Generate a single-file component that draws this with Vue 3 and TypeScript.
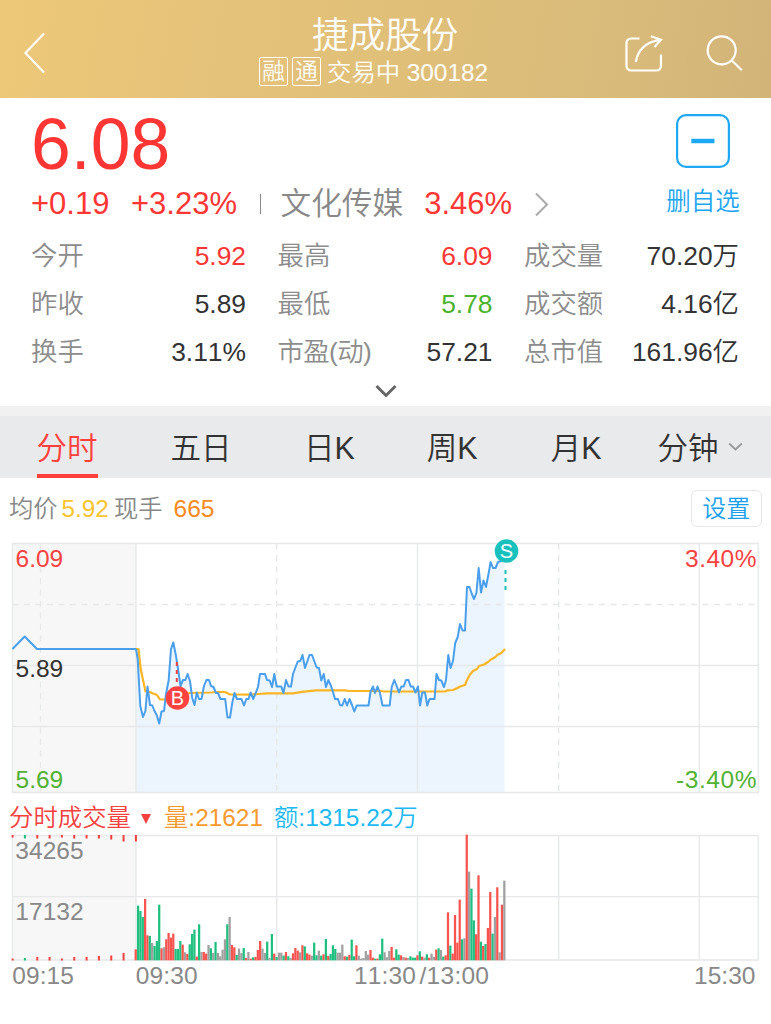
<script setup lang="ts">
interface Stat { label: string; value: string; tone?: 'up' | 'down' }
interface Bar { x: number; h: number; fill: string }
interface Label { text: string; x: number; y: number; w: number; tone: string }

const stats: Stat[] = [
  { label: '今开', value: '5.92', tone: 'up' },
  { label: '最高', value: '6.09', tone: 'up' },
  { label: '成交量', value: '70.20万' },
  { label: '昨收', value: '5.89' },
  { label: '最低', value: '5.78', tone: 'down' },
  { label: '成交额', value: '4.16亿' },
  { label: '换手', value: '3.11%' },
  { label: '市盈(动)', value: '57.21' },
  { label: '总市值', value: '161.96亿' },
]

const tabs: string[] = ['分时', '五日', '日K', '周K', '月K', '分钟']

const auction = '12.5,649 24.7,636.5 37,649 136,649'
const price =
  '136,649 137.7,659 140.3,706 143,717 145.4,711 147.5,686.5 150,705 152.3,705.5 154.5,711 156.7,715 159.2,723.5 161.5,711.5 164,711 166,694 168.7,680 171,649 173.3,642.5 176,656 178.2,670 180.5,686 183,680 185.3,680 187.6,674 190,681 192.2,698 194.5,705 196.8,692.5 199,699 201.5,699 204,686 206.4,680 209,680 211,686 213.5,687 216,693 218,693 220.5,699 225.2,699 227.5,717.5 230,717.5 232.2,703 234.5,693 237,699 241.5,699 244,705.5 246.3,699 248.5,699 250.6,692.5 253.3,699 255.7,693 258,687 260,674 265,674 267,680 269.7,680.5 272,687 274.3,674 276.7,686.5 281.3,686.5 283.5,693 286,680 288.5,686.5 291,686.5 293,674 297.7,661.5 300.3,661 302.5,655 305,668 309.5,655 312,655 316.7,667.5 319,668 321.3,680.5 323.7,674 326,687 328.3,680 331,686 333,692 335,699 338,699 340,705 342.3,705.5 344.7,699 347,705.5 349.5,699 352,705 354.3,711.5 356.7,705.5 368.5,705.5 370.5,692 373,686.5 375,693 377.5,686.5 380,693 382.5,705.5 389.7,705.5 391.7,687 394.3,680 396.7,686 399,692.5 401.3,686.5 403.7,686.5 406,680 408.5,680 410.7,686.5 413,686.5 415.5,692.5 418,686.5 420,705.5 422.3,692.5 425,692.5 427.3,705.5 429.5,699 434.5,699 436.5,674 439,680 441.3,680.5 444,687 446,680 448.3,655 450.6,668 453,661 455.2,643 457.7,637 460,624 462.5,630.5 465,630.5 467,587 469.5,587 471.5,593 474,599 476.4,593 478.7,568 481,592.5 483.5,580.5 486,587 488.5,574 490.6,562 493,568 495.5,568 498,562 501,561 504.5,556'
const average =
  '136,649 138.5,649 140.7,669 143,680 145.5,691.5 150,692 152.5,693.3 157,695 160,699.5 165,699.5 172,696 190,693 212,692.5 215,692 225,692 230,694.5 250,694.7 258,694 267,693.3 293,693.3 302,691.8 316,690.3 345,690.3 349,691 380,691 385,691.5 445,691.5 448,690.3 453,690 457.5,688 460,686.5 465,685 467,680 470,674.5 473,671 477,669 479,666 484,664.5 488,662 491,659.5 495,657.3 498,654.5 501,653.3 505,649'

const palette: Record<string, string> = { r: '#f8544f', g: '#1fbf80', n: '#a0a0a0' }

// One token per minute: colour key followed by the bar's top on a 0-496 scale.
const ticks =
  'r463 g332 g348 g366 r312 r421 g423 n444 g453 g438 g329 r460 n457 r433 r414 r428 r416 g462 g462 g438 r449 n472 r477 g448 g417 g404 r485 g388 n471 r471 r476 n450 g460 n474 g441 n474 n484 n464 n433 g388 n366 r450 r457 g480 n461 n474 g459 r489 n471 r491 g487 r486 r465 r438 n461 n474 g440 n489 g417 r476 g486 n473 n473 g482 r471 g484 n489 r475 r459 r467 n472 r451 g454 r475 r479 n482 g443 g481 n467 g482 r478 g432 r483 g477 g451 g462 n473 n473 n449 r484 g485 r480 g434 g484 r451 n482 n491 n489 n468 n479 r465 r488 g491 r491 g478 g431 n472 n487 n468 r456 r488 g463 g479 r481 n486 r488 n489 g484 g488 g488 r481 g469 r485 n488 g478 r488 n476 n486 r464 g460 n465 g485 r481 r352 g452 r476 r360 r443 r314 g433 n430 r119 n230 g281 g376 r418 r241 g440 r453 g447 r399 r291 g416 n366 r277 n472 r329 n257'.split(' ')
const step = (504.3 - 135.7) / (ticks.length - 1)
const bars: Bar[] = ticks.map((t, i) => ({
  x: 135.7 + i * step - 1.1,
  h: (496 - Number(t.slice(1))) / 3,
  fill: palette[t[0]],
}))

const topTicks = [2.5, 3.5, 3.5, 3.5, 2.5, 3.5, 3.5, 3.5, 4.5, 6.5, 6.5]
const bottomTicks = [2, 2.5, 3.5, 3.5, 2, 3.5, 3.5, 4.5, 5, 7.5]
const tickX = (i: number): number => 11.6 + i * 12.33
const tickFill = (i: number): string => (i === 1 ? palette.g : '#f3403c')

const labels: Label[] = [
  { text: '6.09', x: 15.5, y: 567, w: 47.7, tone: 'up' },
  { text: '5.89', x: 15.5, y: 677, w: 47.7, tone: 'ink' },
  { text: '5.69', x: 15.5, y: 787.5, w: 47.7, tone: 'down' },
  { text: '3.40%', x: 685, y: 567, w: 71.5, tone: 'up' },
  { text: '-3.40%', x: 676, y: 787.5, w: 80.5, tone: 'down' },
  { text: '34265', x: 15.2, y: 858.8, w: 68.5, tone: 'mute' },
  { text: '17132', x: 15.2, y: 920.3, w: 68.5, tone: 'mute' },
  { text: '09:15', x: 12.2, y: 983.6, w: 61.8, tone: 'mute' },
  { text: '09:30', x: 135.8, y: 983.6, w: 61.8, tone: 'mute' },
  { text: '11:30', x: 354, y: 983.6, w: 61.8, tone: 'mute' },
  { text: '/13:00', x: 419.5, y: 983.6, w: 69.5, tone: 'mute' },
  { text: '15:30', x: 694, y: 983.6, w: 61.5, tone: 'mute' },
]
</script>

<template>
  <main class="page">
    <header class="bar">
      <svg class="back" width="24" height="44" viewBox="0 0 24 44"><path d="M21 2.5 2.5 22 21 41.5" /></svg>
      <div class="heading">
        <h1>捷成股份</h1>
        <div class="sub">
          <span class="tag">融</span><span class="tag">通</span>
          <span class="state">交易中</span><span class="code">300182</span>
        </div>
      </div>
      <div class="actions">
        <svg width="40" height="40" viewBox="0 0 40 40">
          <path d="M14.500 4.500H6a4.500 4.500 0 0 0-4.500 4.500V32a4.500 4.500 0 0 0 4.500 4.500H31.500a4.500 4.500 0 0 0 4.500-4.500V20.500" />
          <path d="M10.800 28.200C12.500 17 19 8.500 35 5.900M25.800 2.300l10.200 3.400-6.500 7.300" />
        </svg>
        <svg width="40" height="40" viewBox="0 0 40 40">
          <circle cx="14.700" cy="16.300" r="14" /><path d="m24.600 26.200 10.200 10" />
        </svg>
      </div>
    </header>

    <section class="summary">
      <div class="top">
        <div class="quote">
          <div class="last">6.08</div>
          <div class="change">
            <span class="up">+0.19</span><span class="up pct">+3.23%</span>
            <i class="rule"></i>
            <span class="sector">文化传媒</span><span class="up">3.46%</span>
            <svg width="16" height="25" viewBox="0 0 16 25"><path d="m2 1.500 11 11-11 11" /></svg>
          </div>
        </div>
        <div class="favourite">
          <svg width="54" height="54" viewBox="0 0 54 54">
            <rect x="1.100" y="1.100" width="51.800" height="51.800" rx="9" /><path d="M15.300 27h23.200" />
          </svg>
          <span>删自选</span>
        </div>
      </div>
      <dl class="stats">
        <div v-for="s in stats" :key="s.label">
          <dt>{{ s.label }}</dt><dd :class="s.tone">{{ s.value }}</dd>
        </div>
      </dl>
      <svg class="more" width="24" height="16" viewBox="0 0 24 16"><path d="m2.500 3 9.500 9.500L21.500 3" /></svg>
    </section>

    <nav class="tabs">
      <span v-for="(t, i) in tabs" :key="t" :class="{ active: i === 0 }">{{ t }}</span>
      <svg width="15" height="10" viewBox="0 0 15 10"><path d="m1.200 1.500 6.300 6 6.300-6" /></svg>
    </nav>

    <div class="legend">
      <span>均价</span><span class="avg">5.92</span><span>现手</span><span class="lot">665</span>
      <button type="button">设置</button>
    </div>

    <div class="charts">
      <div class="vol-legend">
        <span class="name">分时成交量</span>
        <svg width="10" height="10" viewBox="0 0 10 10"><path d="M0 0h10L5 10z" /></svg>
        <span class="vol">量:21621</span><span class="amt">额:1315.22万</span>
      </div>
      <svg class="plot" width="771" height="484" viewBox="0 540 771 484">
        <rect class="pre" x="12.500" y="543.500" width="123.500" height="249" />
        <rect class="pre" x="12.500" y="835.500" width="123.500" height="125" />
        <polygon class="area" :points="`136,792.500 ${price} 504.500,792.500`" />
        <g class="grid">
          <path d="M12.500 543.500H758.200V792.500H12.500ZM12.500 665.500H758.200M12.500 726.500H758.200M136 543.500V792.500M417.500 543.500V792.500M699.300 543.500V792.500" />
          <path class="dash" d="M12.500 604.500H758.200M40.500 543.500V792.500M276.700 543.500V792.500M558.700 543.500V792.500" />
          <path d="M12.500 835.500H758.200V960H12.500ZM12.500 896.700H758.200M136 835.500V960M276.700 835.500V960M417.500 835.500V960M558.700 835.500V960M699.300 835.500V960" />
        </g>
        <polyline class="average" :points="average" />
        <polyline class="price" :points="auction" />
        <polyline class="price" :points="price" />
        <rect v-for="(b, i) in bars" :key="i" :x="b.x" :y="960.300 - b.h" width="2.250" :height="b.h" :fill="b.fill" />
        <rect v-for="(h, i) in topTicks" :key="'t' + i" :x="tickX(i)" y="835" width="2" :height="h" :fill="tickFill(i)" />
        <rect v-for="(h, i) in bottomTicks" :key="'b' + i" :x="tickX(i)" :y="960.500 - h" width="2" :height="h" :fill="tickFill(i)" />
        <path class="buy-line" d="M176.800 662V686" />
        <circle cx="177.500" cy="698" r="11.800" fill="#ff423f" />
        <text class="pin" x="177.500" y="705.200">B</text>
        <path class="sell-line" d="M505.500 570V592" />
        <circle cx="506.500" cy="551" r="11.800" fill="#18c1bd" />
        <text class="pin" x="506.500" y="558.300">S</text>
        <text v-for="l in labels" :key="l.text" :class="l.tone" :x="l.x" :y="l.y" :textLength="l.w">{{ l.text }}</text>
      </svg>
    </div>
  </main>
</template>

<style>
body { background: #fff; }
</style>

<style scoped>
.page {
  width: 771px;
  height: 1024px;
  overflow: hidden;
  background: #fff;
  color: #333;
  font-family: "Liberation Sans", "Noto Sans CJK SC", sans-serif;
  font-weight: 350;
  font-kerning: none;
  white-space: nowrap;
}
svg { display: block; fill: none; flex: none; overflow: visible; }
.up { color: #ff3633; fill: #f8423f; }
.down { color: #4bb32a; fill: #51b232; }

.bar {
  display: grid;
  grid-template-columns: 259px 1fr 146px;
  height: 97.500px;
  background: linear-gradient(100deg, #edc878 0%, #e5c27a 30%, #dfbf78 55%, #d9bb7b 78%, #d2b479 100%);
  color: #fff;
}
.bar svg { stroke: #fff; stroke-width: 2.200; }
.back { margin: 31px 0 0 22.500px; }
.heading { padding-top: 16px; }
h1 { margin: 0 0 0 53px; font-size: 36.600px; font-weight: inherit; line-height: 40px; }
.sub { display: flex; height: 32px; line-height: 33px; font-size: 24.400px; }
.tag {
  box-sizing: border-box;
  width: 29px;
  height: 29px;
  margin: 1px 4px 0 0;
  border: 1px solid #fff;
  border-radius: 2px;
  font-size: 22.500px;
  line-height: 27px;
  text-align: center;
}
.state { margin-left: 2px; }
.code { margin-left: 6.500px; }
.actions { display: flex; gap: 41.500px; padding-top: 33.500px; }

.summary { height: 308.500px; }
.top { display: flex; justify-content: space-between; height: 134px; }
.quote { padding-left: 31px; }
.last { height: 90.400px; line-height: 92px; font-size: 71.500px; color: #ff3633; }
.change { display: flex; align-items: center; height: 30.400px; line-height: 30.400px; padding-top: 1px; font-size: 31px; }
.pct { margin-left: 21.500px; }
.rule { width: 1.500px; height: 20px; margin: 0 19px 0 23px; background: #888; }
.sector { margin-right: 21px; font-size: 30.700px; color: #888; }
.change svg { margin-left: 22px; stroke: #aaa; stroke-width: 2; }
.favourite {
  display: flex;
  flex-direction: column;
  align-items: center;
  width: 76px;
  padding: 16.200px 30px 0 0;
  color: #1ba5f3;
  font-size: 24.500px;
  line-height: 30px;
}
.favourite svg { margin: 0 0 19px -1px; stroke: #1ea8f4; stroke-width: 2.200; }
.favourite path { stroke-width: 4.500; }
.stats {
  display: grid;
  grid-template-columns: 215px 215px 215px;
  grid-auto-rows: 48px;
  column-gap: 31.500px;
  margin: 0 0 0 31px;
  font-size: 26.400px;
  line-height: 48px;
}
.stats div { display: flex; justify-content: space-between; }
.stats dt { color: #8c8c8c; }
.stats div:nth-child(8) dt { letter-spacing: -0.600px; }
.stats dd { margin: 0; }
.more { margin: 7.500px auto 0; stroke: #666; stroke-width: 3; }

.tabs {
  display: flex;
  box-sizing: border-box;
  height: 71.500px;
  border-top: 10px solid #f1f1f1;
  background: #e9eaeb;
  font-size: 30.500px;
  line-height: 64px;
}
.tabs span { height: 57.500px; }
.tabs span:nth-child(1) { margin-left: 36.500px; }
.tabs span:nth-child(2) { margin-left: 73px; }
.tabs span:nth-child(3) { margin-left: 72.500px; }
.tabs span:nth-child(4) { margin-left: 72px; }
.tabs span:nth-child(5) { margin-left: 73px; }
.tabs span:nth-child(6) { margin-left: 56px; }
.tabs .active { color: #ff3f3b; border-bottom: 4px solid #ff3f3b; }
.tabs svg { margin: 26px 0 0 9px; stroke: #999; stroke-width: 1.800; }

.legend {
  display: flex;
  align-items: center;
  height: 62.500px;
  padding: 0 9.300px 0 9px;
  color: #888;
  font-size: 24.300px;
  line-height: 62.500px;
}
.avg { margin: 0 5px 0 4px; color: #fcc42c; }
.lot { margin-left: 11px; color: #f98a20; font-size: 24.600px; }
button {
  width: 71px;
  height: 37px;
  margin: 0 0 0 auto;
  padding: 0;
  border: 1px solid #e5e7e8;
  border-radius: 6px;
  background: #fff;
  color: #189ff0;
  font: inherit;
  font-size: 24px;
  line-height: 35px;
}

.charts { position: relative; height: 484px; }
.vol-legend {
  position: absolute;
  left: 9px;
  top: 262.500px;
  display: flex;
  align-items: center;
  font-size: 24.400px;
  line-height: 30px;
}
.name { color: #f5403d; }
.vol-legend svg { margin: 2px 12.500px 0 10.500px; fill: #f5403d; }
.vol { margin-right: 11px; color: #f79a2c; }
.amt { color: #1cb9f5; }
.pre { fill: #f7f7f7; }
.area { fill: #ecf5fd; }
.grid { stroke: #e6e8e9; stroke-width: 1.300; }
.dash { stroke-dasharray: 6 5.500; }
.price { stroke: #4a9fed; stroke-width: 2; stroke-linejoin: round; }
.average { stroke: #fcb522; stroke-width: 2.200; stroke-linejoin: round; }
.buy-line { stroke: #f0403d; stroke-width: 2; stroke-dasharray: 4 4; }
.sell-line { stroke: #18bfb5; stroke-width: 2; stroke-dasharray: 4 4; }
.plot text { font-size: 24.500px; }
.plot .pin { fill: #fff; font-size: 20px; text-anchor: middle; }
.ink { fill: #333; }
.mute { fill: #888; }
</style>
